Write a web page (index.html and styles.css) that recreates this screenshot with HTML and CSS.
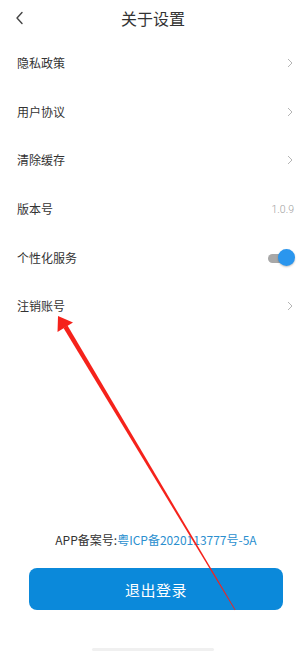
FILE: index.html
```html
<!DOCTYPE html>
<html lang="zh">
<head>
<meta charset="utf-8">
<link rel="stylesheet" href="styles.css">
</head>
<body>
<div class="page">
  <header class="header">
    <span class="back">
      <svg width="12" height="14" viewBox="0 0 12 14"><path d="M8 1.5 L3 7 L8 12.5" fill="none" stroke="#444" stroke-width="1.4" stroke-linecap="round" stroke-linejoin="round"/></svg>
    </span>
    <h1 class="title">关于设置</h1>
  </header>
  <ul class="list">
    <li class="row"><span class="label">隐私政策</span><span class="chev"><svg width="6" height="10" viewBox="0 0 6 10"><path d="M1 1 L5 5 L1 9" fill="none" stroke="#b5b5b5" stroke-width="1"/></svg></span></li>
    <li class="row"><span class="label">用户协议</span><span class="chev"><svg width="6" height="10" viewBox="0 0 6 10"><path d="M1 1 L5 5 L1 9" fill="none" stroke="#b5b5b5" stroke-width="1"/></svg></span></li>
    <li class="row"><span class="label">清除缓存</span><span class="chev"><svg width="6" height="10" viewBox="0 0 6 10"><path d="M1 1 L5 5 L1 9" fill="none" stroke="#b5b5b5" stroke-width="1"/></svg></span></li>
    <li class="row"><span class="label">版本号</span><span class="value">1.0.9</span></li>
    <li class="row"><span class="label">个性化服务</span><span class="switch"><span class="track"></span><span class="knob"></span></span></li>
    <li class="row"><span class="label">注销账号</span><span class="chev"><svg width="6" height="10" viewBox="0 0 6 10"><path d="M1 1 L5 5 L1 9" fill="none" stroke="#b5b5b5" stroke-width="1"/></svg></span></li>
  </ul>
  <div class="spacer"></div>
  <p class="icp">APP备案号:<span class="icp-link">粤ICP备2020113777号-5A</span></p>
  <button class="logout">退出登录</button>
  <div class="home"><span class="home-bar"></span></div>
  <svg class="arrow" width="306" height="654" viewBox="0 0 306 654">
    <polygon points="58,316 57.5,332 73,322.5" fill="#f5221b"/>
    <polygon points="63.5,328 67.5,325.5 235.5,609.8 234.9,610.2" fill="#f5221b"/>
  </svg>
</div>
</body>
</html>
```

FILE: styles.css
```css
* { box-sizing: border-box; margin: 0; padding: 0; }
html, body { width: 306px; height: 654px; background: #fff; overflow: hidden; }
body { font-family: "Noto Sans CJK SC", "Noto Sans", sans-serif; color: #333; }
.page { position: relative; width: 306px; height: 654px; display: flex; flex-direction: column; }
.header { height: 39px; display: flex; align-items: center; justify-content: center; position: relative; }
.back { position: absolute; left: 14px; top: 11px; width: 12px; height: 14px; display: flex; }
.title { font-size: 16px; font-weight: 400; color: #333; line-height: 20px; margin-top: -3px; }
.list { list-style: none; }
.row { height: 48.6px; display: flex; align-items: center; justify-content: space-between; padding: 0 13px 0 17px; }
.label { font-size: 12px; color: #333; line-height: 16px; }
.chev { display: flex; width: 6px; height: 10px; }
.value { font-size: 10.5px; color: #a0a0a0; font-family: "Roboto", sans-serif; font-weight: 300; margin-right: -1px; }
.switch { position: relative; width: 30px; height: 18px; margin-right: -2px; }
.track { position: absolute; left: 3px; top: 5px; width: 22px; height: 9px; border-radius: 5px; background: #a8a8a8; }
.knob { position: absolute; right: 0; top: 0; width: 17px; height: 17px; border-radius: 50%; background: #2a96ee; box-shadow: 0 1px 2px rgba(0,0,0,0.25); }
.spacer { flex: 1; }
.icp { text-align: center; font-size: 12px; color: #333; line-height: 16px; padding-left: 6px; }
.icp-link { color: #2b8fcf; }
.logout { margin: 20px 0 0 29px; width: 254px; height: 42px; border: none; border-radius: 8px; background: #0b89da; color: #fff; font-family: "Noto Sans CJK SC", sans-serif; font-size: 15px; letter-spacing: 0.5px; }
.home { height: 44px; display: flex; align-items: flex-end; justify-content: center; padding-bottom: 3px; }
.home-bar { width: 122px; height: 3px; border-radius: 2px; background: #f0f0f0; }
.arrow { position: absolute; left: 0; top: 0; pointer-events: none; }
```
